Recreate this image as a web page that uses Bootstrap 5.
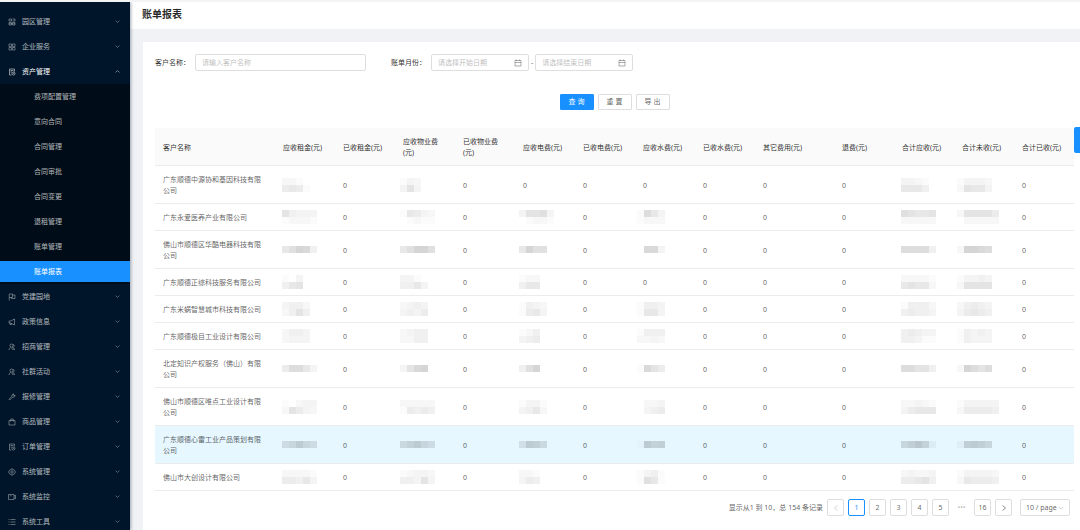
<!DOCTYPE html>
<html lang="zh-CN">
<head>
<meta charset="utf-8">
<meta name="viewport" content="width=device-width, initial-scale=1">
<title>账单报表</title>
<link rel="stylesheet" href="https://cdn.jsdelivr.net/npm/bootstrap@5.3.0/dist/css/bootstrap.min.css">
<style>
  :root { --line: #ececec; --edge: #dedede; --brand: #1890ff; --ink: rgba(0,0,0,.65); --ink-strong: rgba(0,0,0,.85); }
  body { font-family: "Noto Sans", "Noto Sans CJK SC", sans-serif; font-size: 7px; line-height: 11px; color: var(--ink); background: #f0f2f5; }
  svg.ico { width: 8px; height: 8px; fill: none; stroke: currentColor; stroke-width: 1.4; flex: none; }
  .shell { border-top: 2px solid #f3f4f5; height: 100vh; }
  .side { width: 130px; background: #001529; box-shadow: 1px 0 3px rgba(0,21,41,.35); padding-top: 7px; z-index: 2; }
  .side a { height: 21px; margin: 2px 0; padding: 0 8px; color: rgba(255,255,255,.7); text-decoration: none; }
  .side a.open { color: #fff; }
  .side svg.ico { opacity: .75; }
  .side .word { padding-left: 6px; }
  .side .sub { background: #000c17; }
  .side .sub a { padding-left: 34px; }
  .side .sub a.current { background: var(--brand); color: #fff; }
  .side svg.arrow { width: 5px; height: 5px; margin-right: 2px; stroke-width: 2; }
  .titlebar { height: 27px; padding: 0 12px; }
  .titlebar h1 { font-size: 10px; line-height: 14px; font-weight: 700; color: var(--ink-strong); padding-bottom: 4px; }
  .panel { margin: 13px 0 0 13px; padding: 12px 6px 24px 12px; }
  .filters { gap: 25px; }
  .field label { color: var(--ink-strong); margin-right: 5px; }
  .box { height: 17px; border: 1px solid var(--edge); border-radius: 2px; background: #fff; padding: 0 6px; color: var(--ink); font-size: 7px; line-height: 11px; }
  .box input { border: 0; outline: 0; padding: 0; min-width: 0; background: none; color: inherit; }
  input::placeholder { color: #bfbfbf; opacity: 1; }
  .w-name { width: 171px; }
  .w-date { width: 98px; }
  .w-date svg.ico { color: #888; }
  .dash { padding: 0 2px; }
  .actions { margin-top: 23px; }
  .tool { height: 16px; width: 34px; padding: 0; font-size: 7px; line-height: 12px; border-radius: 1px; border: 1px solid var(--edge); background: #fff; color: var(--ink); }
  .tool.main { background: var(--brand); border-color: var(--brand); color: #fff; }
  .report { table-layout: fixed; width: 100%; border-collapse: separate; border-spacing: 0; margin: 18px 0 8px; }
  .report th, .report td { padding: 8px 8px 7px; border-bottom: 1px solid var(--line); vertical-align: middle; font-weight: 400; }
  .report th { background: #fafafa; color: var(--ink-strong); }
  .report .picked td { background: #e6f7ff; }
  .report td.masked { padding: 0 0 0 7px; }
  .report td.masked:nth-child(4) { padding-left: 5px; }
  .report td.masked:nth-child(6) { padding-left: 4px; }
  .report td.masked:nth-child(8) { padding-left: 2px; }
  .report td.masked:nth-child(13) { padding-left: 3px; }
  .masked svg { display: block; }
  .c-name { width: 120px; } .c-num { width: 60px; } .c-other { width: 79px; }
  .pager { padding-right: 4px; }
  .pg { width: 17px; height: 17px; border: 1px solid var(--edge); border-radius: 2px; background: #fff; color: var(--ink); padding: 0; font-size: 7px; line-height: 11px; }
  .pg.on { border-color: var(--brand); color: var(--brand); }
  .pg:disabled { color: #c4c4c4; }
  .dots { width: 17px; color: #bfbfbf; }
  .size-box { width: 50px; padding: 0 5px; }
  .size-box select { appearance: none; border: 0; background: none; padding: 0; color: inherit; outline: 0; width: 32px; }
  .size-box svg.ico { width: 6px; height: 6px; color: #aaa; }
  .drawer-tab { top: 127px; width: 6px; height: 26px; background: var(--brand); border: 0; border-radius: 2px 0 0 2px; padding: 0; }
</style>
</head>
<body>
<svg class="d-none" aria-hidden="true">
  <symbol id="i-park" viewBox="0 0 16 16"><path d="M2 2h5v4H2zM9 2h5v4M14 6H9M2 9h5v5H2zM9 9h5v5H9zM9 11.500h5M2 11.500h5"/></symbol>
  <symbol id="i-grid" viewBox="0 0 16 16"><path d="M2 2h5v5H2zM9 2h5v5H9zM2 9h5v5H2zM9 9h5v5H9z"/></symbol>
  <symbol id="i-doc" viewBox="0 0 16 16"><path d="M7 14H3V2h10v5M5 5h6M5 8h3"/><circle cx="11" cy="11" r="3"/><path d="M11 9.500V11h1.500"/></symbol>
  <symbol id="i-flag" viewBox="0 0 16 16"><path d="M2.500 15V2H9v7H2.500M9 4h5v7H7V9"/></symbol>
  <symbol id="i-horn" viewBox="0 0 16 16"><path d="M2 6h3l8-4v12l-8-4H2zM4 10v3h3v-2"/></symbol>
  <symbol id="i-team" viewBox="0 0 16 16"><circle cx="7" cy="5" r="3"/><path d="M2 14c0-3 2-5 4-5.500M10 2.500c3 1 3 4 1 5.500M14 14l-2-2"/><circle cx="10" cy="11" r="2"/></symbol>
  <symbol id="i-tool" viewBox="0 0 16 16"><path d="M2 12.500 7.500 7C7 4 9 1.500 12 2L9.700 4.300l2 2L14 4c.5 3-2 5-5 4.500L3.500 14z"/></symbol>
  <symbol id="i-bag" viewBox="0 0 16 16"><path d="M2 5h12v9H2zM5.500 7V2h5v5"/></symbol>
  <symbol id="i-gear" viewBox="0 0 16 16"><path d="M6 2h4l1 2 2 .5 2 3.500-2 3.500-2 .5-1 2H6l-1-2-2-.5L1 8l2-3.500L5 4z"/><circle cx="8" cy="8" r="2.300"/></symbol>
  <symbol id="i-video" viewBox="0 0 16 16"><path d="M1 3h11v10H1zM12 6l3-1.500v7L12 10M3.500 5.500h3"/></symbol>
  <symbol id="i-list" viewBox="0 0 16 16"><path d="M5 3h10M5 8h10M5 13h10M1 3h2M1 8h2M1 13h2"/></symbol>
  <symbol id="i-down" viewBox="0 0 16 16"><path d="m2 5 6 6 6-6"/></symbol>
  <symbol id="i-up" viewBox="0 0 16 16"><path d="m2 11 6-6 6 6"/></symbol>
  <symbol id="i-left" viewBox="0 0 16 16"><path d="m11 3-6 5 6 5"/></symbol>
  <symbol id="i-right" viewBox="0 0 16 16"><path d="m5 3 6 5-6 5"/></symbol>
  <symbol id="i-cal" viewBox="0 0 16 16"><path d="M2 3h12v11H2zM2 7h12M5 1v3M11 1v3"/></symbol>
</svg>

<div class="shell d-flex position-relative overflow-hidden">
  <nav class="side flex-shrink-0 overflow-hidden" id="menu" aria-label="主菜单"></nav>

  <main class="flex-grow-1 overflow-hidden">
    <header class="titlebar bg-white d-flex align-items-center"><h1 class="m-0">账单报表</h1></header>
    <section class="panel bg-white">
      <form onsubmit="return false">
        <div class="filters d-flex align-items-center">
          <div class="field d-flex align-items-center">
            <label for="cust">客户名称：</label>
            <input id="cust" class="box w-name" type="text" placeholder="请输入客户名称">
          </div>
          <div class="field d-flex align-items-center">
            <label for="from">账单月份：</label>
            <span class="box w-date d-flex align-items-center"><input id="from" class="flex-grow-1" type="text" placeholder="请选择开始日期"><svg class="ico"><use href="#i-cal"/></svg></span>
            <span class="dash">-</span>
            <span class="box w-date d-flex align-items-center"><input id="to" aria-label="结束日期" class="flex-grow-1" type="text" placeholder="请选择结束日期"><svg class="ico"><use href="#i-cal"/></svg></span>
          </div>
        </div>
        <div class="actions d-flex justify-content-center gap-1">
          <button class="tool main" type="submit">查 询</button>
          <button class="tool" type="reset">重 置</button>
          <button class="tool" type="button">导 出</button>
        </div>
      </form>

      <table class="report">
        <colgroup><col class="c-name"><col class="c-num" span="8"><col class="c-other"><col class="c-num" span="4"></colgroup>
        <thead><tr>
          <th>客户名称</th><th>应收租金(元)</th><th>已收租金(元)</th><th>应收物业费(元)</th><th>已收物业费(元)</th><th>应收电费(元)</th><th>已收电费(元)</th><th>应收水费(元)</th><th>已收水费(元)</th><th>其它费用(元)</th><th>退费(元)</th><th>合计应收(元)</th><th>合计未收(元)</th><th>合计已收(元)</th>
        </tr></thead>
        <tbody id="rows"></tbody>
      </table>

      <div class="pager d-flex justify-content-end align-items-center gap-1">
        <span>显示从1 到 10，总 154 条记录</span>
        <button class="pg d-flex align-items-center justify-content-center" disabled aria-label="上一页"><svg class="ico"><use href="#i-left"/></svg></button>
        <button class="pg on">1</button>
        <button class="pg">2</button>
        <button class="pg">3</button>
        <button class="pg">4</button>
        <button class="pg">5</button>
        <span class="dots text-center">•••</span>
        <button class="pg">16</button>
        <button class="pg d-flex align-items-center justify-content-center" aria-label="下一页"><svg class="ico"><use href="#i-right"/></svg></button>
        <span class="box size-box d-flex align-items-center ms-1"><select aria-label="每页条数"><option>10 / page</option><option>20 / page</option></select><svg class="ico"><use href="#i-down"/></svg></span>
      </div>
    </section>
  </main>
  <button class="drawer-tab position-fixed end-0" aria-label="设置"></button>
</div>

<script>
  const menu = [
    ['park', '园区管理'], ['grid', '企业服务'],
    ['doc', '资产管理', ['费项配置管理', '意向合同', '合同管理', '合同审批', '合同变更', '退租管理', '账单管理', '账单报表']],
    ['flag', '党建园地'], ['horn', '政策信息'], ['team', '招商管理'], ['team', '社群活动'], ['tool', '报修管理'],
    ['bag', '商品管理'], ['doc', '订单管理'], ['gear', '系统管理'], ['video', '系统监控'], ['list', '系统工具']
  ];
  const icon = (n, c = '') => `<svg class="ico ${c}"><use href="#i-${n}"/></svg>`;
  document.getElementById('menu').innerHTML = menu.map(([ic, text, sub]) =>
    `<div class="d-flex flex-column"><a href="#" class="d-flex align-items-center ${sub ? 'open' : ''}">${icon(ic)}<span class="word flex-grow-1">${text}</span>${icon(sub ? 'up' : 'down', 'arrow')}</a></div>` +
    (sub ? `<div class="sub d-flex flex-column">${sub.map(s => `<a href="#" class="d-flex align-items-center ${s === '账单报表' ? 'current' : ''}">${s}</a>`).join('')}</div>` : '')
  ).join('');

  // Masked amounts: each hex digit is the darkness of one mosaic tile, "/" starts the next tile row.
  const bills = [
    ['广东顺德中源协和基因科技有限公司', '221/5651', '132/373', '', '', '3321/6664', '13332/27663'],
    ['广东永爱医养产业有限公司', '74333/12221', '16532/01211', '37783/01221', '1963/1222', '87667/22222', '277775/022222'],
    ['佛山市顺德区华酷电器科技有限公司', '68ba4', '68bb8', '6b88', '0aa3', '99994', '2bba9'],
    ['广东顺德正综科技服务有限公司', '1030/4670', '3310/4463', '122/466', '', '22221/67662', '13343/27777'],
    ['广东米蜗智慧城市科技有限公司', '3442/2474', '2343/3435', '1432/1563', '1443/1663', '14442/45443', '24543/35654'],
    ['广东顺德极目工业设计有限公司', '2443/2333', '2344/2244', '124/345', '1444/2232', '45433/44311', '14343/14333'],
    ['北定知识产权服务（佛山）有限公司', '59963', '37ab', '48b', '1a75', '99774', '2b979'],
    ['佛山市顺德区唯点工业设计有限公司', '10233/27532', '22222/15454', '1331/3462', '0223/0345', '22321/35666', '133333/255554'],
    ['广东顺德心雷工业产品策划有限公司', '79c97', '8ac97', '6cb8', '1cab', '9bda3', '2bcb9'],
    ['佛山市大创设计有限公司', '22221/55463', '12332/44373', '221/354', '1341/1861', '23223/55674', '133332/265554']
  ];
  const cell = code => {
    if (!code) return '<td>0</td>';
    const lines = code.split('/');
    const tiles = lines.map((l, y) => [...l].map((d, x) =>
      `<rect x="${x * 7}" y="${y * 7}" width="7" height="7" fill-opacity="${(parseInt(d, 16) * 0.015).toFixed(3)}"/>`).join('')).join('');
    return `<td class="masked"><svg width="42" height="${lines.length * 7}" aria-label="已隐藏">${tiles}</svg></td>`;
  };
  document.getElementById('rows').innerHTML = bills.map(([name, rent, prop, elec, water, due, unpaid], i) =>
    `<tr class="${i === 8 ? 'picked' : ''}"><td>${name}</td>${cell(rent)}${cell()}${cell(prop)}${cell()}${cell(elec)}${cell()}${cell(water)}${cell()}${cell()}${cell()}${cell(due)}${cell(unpaid)}${cell()}</tr>`
  ).join('');
</script>
<script src="https://cdn.jsdelivr.net/npm/bootstrap@5.3.0/dist/js/bootstrap.bundle.min.js"></script>
</body>
</html>
